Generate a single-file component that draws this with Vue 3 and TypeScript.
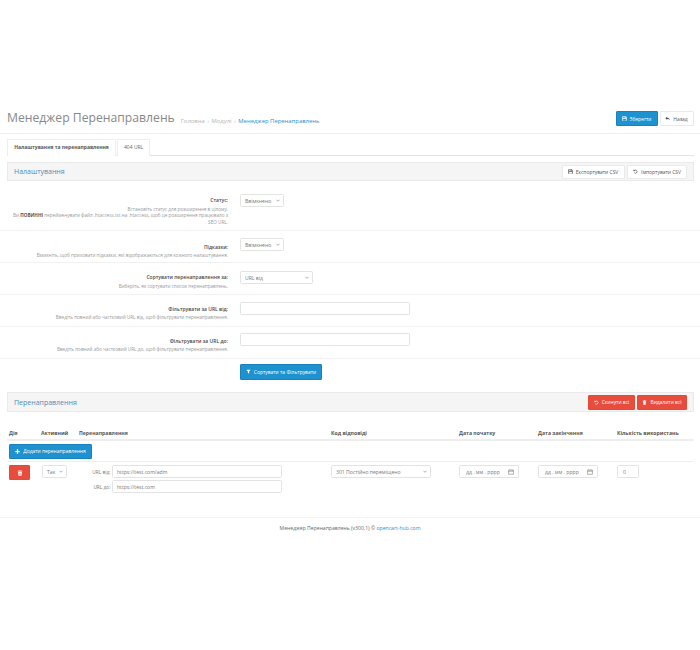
<script setup lang="ts">
interface Row { label: string; help: string[]; kind: 'select' | 'wide' | 'input'; value?: string; cls: string }
const rows: Row[] = [
  { label: 'Статус:', help: ['Встановіть статус для розширення в цілому.', 'Ви <b>ПОВИННІ</b> перейменувати файл .htaccess.txt на .htaccess, щоб це розширення працювало з', 'SEO URL.'], kind: 'select', value: 'Ввімкнено', cls: 'r1' },
  { label: 'Підказки:', help: ['Вмикніть, щоб приховати підказки, які відображаються для кожного налаштування.'], kind: 'select', value: 'Ввімкнено', cls: 'r2' },
  { label: 'Сортувати перенаправлення за:', help: ['Виберіть, як сортувати список перенаправлень.'], kind: 'wide', value: 'URL від', cls: 'r3' },
  { label: 'Фільтрувати за URL від:', help: ['Введіть повний або частковий URL від, щоб фільтрувати перенаправлення.'], kind: 'input', cls: 'r4' },
  { label: 'Фільтрувати за URL до:', help: ['Введіть повний або частковий URL до, щоб фільтрувати перенаправлення.'], kind: 'input', cls: 'r5' }
]
const cols = ['Дія', 'Активний', 'Перенаправлення', 'Код відповіді', 'Дата початку', 'Дата закінчення', 'Кількість використань']
</script>

<template>
  <div class="page">
    <header class="top">
      <h1>Менеджер Перенаправлень</h1>
      <nav class="crumbs"><span>Головна</span><i>›</i><span>Модулі</span><i>›</i><a>Менеджер Перенаправлень</a></nav>
      <div class="top-btns">
        <button class="btn blue save">
          <svg viewBox="0 0 16 16"><path fill="currentColor" d="M1 1h11l3 3v11H1zM4 2v4h7V2zm4 .7h2v2.6H8zM3.500 9v5h9V9z"/></svg>Зберегти
        </button>
        <button class="btn white back">
          <svg viewBox="0 0 16 16"><path fill="currentColor" d="M7 2v3.500c4.500 0 8 2 8 8-1.500-3-4-4-8-4V13L1 7.500z"/></svg>Назад
        </button>
      </div>
    </header>

    <div class="tabs">
      <div class="tab active">Налаштування та перенаправлення</div>
      <div class="tab">404 URL</div>
    </div>

    <section class="panel first">
      <h2>Налаштування</h2>
      <div class="panel-btns">
        <button class="btn white exp">
          <svg viewBox="0 0 16 16"><path fill="currentColor" d="M1 1h11l3 3v11H1zM4 2v4h7V2zm4 .7h2v2.6H8zM3.500 9v5h9V9z"/></svg>Експортувати CSV
        </button>
        <button class="btn white imp">
          <svg viewBox="0 0 16 16"><path fill="none" stroke="currentColor" stroke-width="2.200" d="M3.500 6A5 5 0 1 1 4 11.500"/><path fill="currentColor" d="M1 2l6 1-5 5z"/></svg>Імпортувати CSV
        </button>
      </div>
    </section>

    <div class="form">
      <div v-for="r in rows" :key="r.label" class="row" :class="r.cls">
        <div class="lab">
          <strong>{{ r.label }}</strong>
          <p v-for="h in r.help" :key="h" v-html="h"></p>
        </div>
        <div class="ctl">
          <div v-if="r.kind !== 'input'" class="sel" :class="r.kind">
            <span>{{ r.value }}</span>
            <svg viewBox="0 0 10 6"><path fill="none" stroke="#666" stroke-width="1.300" d="M1 1l4 4 4-4"/></svg>
          </div>
          <div v-else class="inp big"></div>
        </div>
      </div>
      <div class="submit">
        <button class="btn blue sort">
          <svg viewBox="0 0 16 16"><path fill="currentColor" d="M1 2h14L10 8v7L6 12V8z"/></svg>Сортувати та Фільтрувати
        </button>
      </div>
    </div>

    <section class="panel second">
      <h2>Перенаправлення</h2>
      <div class="panel-btns">
        <button class="btn red reset">
          <svg viewBox="0 0 16 16"><path fill="none" stroke="currentColor" stroke-width="2.200" d="M3.500 6A5 5 0 1 1 4 11.500"/><path fill="currentColor" d="M1 2l6 1-5 5z"/></svg>Скинути всі
        </button>
        <button class="btn red delall">
          <svg viewBox="0 0 16 16"><path fill="currentColor" d="M6 1h4l1 1h3v2H2V2h3zM3 5h10l-1 10H4zm2.500 2v6h1V7zm4 0v6h1V7z"/></svg>Видалити всі
        </button>
      </div>
    </section>

    <div class="table">
      <div class="grid head">
        <div v-for="c in cols" :key="c">{{ c }}</div>
      </div>
      <div class="add-row">
        <button class="btn blue add">
          <svg viewBox="0 0 16 16"><path fill="currentColor" d="M6 1h4v5h5v4h-5v5H6v-5H1V6h5z"/></svg>Додати перенаправлення
        </button>
      </div>
      <div class="grid body">
        <div><button class="btn red trash"><svg viewBox="0 0 16 16"><path fill="currentColor" d="M6 1h4l1 1h3v2H2V2h3zM3 5h10l-1 10H4zm2.500 2v6h1V7zm4 0v6h1V7z"/></svg></button></div>
        <div><div class="sel yes"><span>Так</span><svg viewBox="0 0 10 6"><path fill="none" stroke="#666" stroke-width="1.300" d="M1 1l4 4 4-4"/></svg></div></div>
        <div class="urls">
          <label><span>URL від:</span><div class="inp url">https://test.com/adm</div></label>
          <label><span>URL до:</span><div class="inp url">https://test.com</div></label>
        </div>
        <div><div class="sel code"><span>301 Постійно переміщено</span><svg viewBox="0 0 10 6"><path fill="none" stroke="#666" stroke-width="1.300" d="M1 1l4 4 4-4"/></svg></div></div>
        <div><div class="inp date"><span>дд . мм . рррр</span><svg viewBox="0 0 16 16"><path fill="none" stroke="#555" stroke-width="1.200" d="M1.500 3h13v11h-13zM1.500 6h13M5 1v2M11 1v2"/></svg></div></div>
        <div><div class="inp date"><span>дд . мм . рррр</span><svg viewBox="0 0 16 16"><path fill="none" stroke="#555" stroke-width="1.200" d="M1.500 3h13v11h-13zM1.500 6h13M5 1v2M11 1v2"/></svg></div></div>
        <div><div class="inp num">0</div></div>
      </div>
    </div>

    <footer class="foot">Менеджер Перенаправлень (v300.1) © <a>opencart-hub.com</a></footer>
  </div>
</template>

<style>
html, body { background: #fff; }
</style>

<style scoped>
.page { width: 700px; height: 650px; overflow: hidden; padding-top: 100px; box-sizing: border-box; font-family: "Open Sans", sans-serif; color: #666; font-size: 5.5px; background: #fff; }
.top { height: 33px; display: flex; align-items: flex-start; padding: 0 6.500px 0 7px; border-bottom: 1px solid #eee; }
h1 { margin: 9px 0 0; font-size: 12.200px; line-height: 18px; font-weight: 400; color: #888; white-space: nowrap; }
.crumbs { margin: 16.500px 0 0 6px; font-size: 5.900px; line-height: 8px; color: #b5b5b5; display: flex; gap: 2.500px; white-space: nowrap; }
.crumbs i { font-style: normal; }
.crumbs a { color: #1e91cf; }
.top-btns { margin-left: auto; display: flex; gap: 2px; margin-top: 11px; }
.btn { display: inline-flex; align-items: center; justify-content: center; gap: 3px; padding: 0; box-sizing: border-box; font: inherit; font-size: 4.950px; border-radius: 1px; border: 1px solid; white-space: nowrap; }
.btn svg { width: 5px; height: 5px; flex: none; }
.blue { background: #1e91cf; border-color: #1a82ba; color: #fff; }
.white { background: #fff; border-color: #eaeaea; color: #555; }
.red { background: #e74c3c; border-color: #e6483a; color: #fff; }
.save { width: 42px; height: 15px; }
.back { width: 34px; height: 15px; }
.tabs { display: flex; margin: 5px 6.500px 0 7px; border-bottom: 1px solid #e4e4e4; height: 16px; gap: 1px; }
.tab { padding: 0 6px; height: 17px; line-height: 15px; box-sizing: border-box; border: 1px solid #eee; border-bottom: 0; border-radius: 1px 1px 0 0; font-size: 5px; color: #666; background: #fff; }
.tab.active { width: 109px; padding: 0; text-align: center; font-weight: 700; color: #555; }
.panel { margin: 0 6.500px 0 7px; height: 19px; box-sizing: border-box; background: #f5f5f5; border: 1px solid #eaeaea; display: flex; align-items: center; justify-content: space-between; padding: 0 5.500px 0 6px; }
.panel.first { margin-top: 6px; }
.panel.second { margin-top: 12px; height: 20px; }
h2 { margin: 0; font-size: 7px; font-weight: 400; color: #4f8bb0; }
.panel-btns { display: flex; gap: 2.500px; }
.exp { width: 63px; height: 14px; }
.imp { width: 60px; height: 14px; }
.second .panel-btns { gap: 2px; }
.reset { width: 47px; height: 15px; }
.delall { width: 50px; height: 15px; }
.row { display: flex; border-bottom: 1px solid #f1f1f1; box-sizing: border-box; }
.r1 { height: 50px; padding-top: 13px; }
.r2 { height: 32px; padding-top: 7px; }
.r3 { height: 32px; padding-top: 8px; }
.r4 { height: 32px; padding-top: 7px; }
.r5 { height: 32px; padding-top: 6px; }
.lab { width: 228px; text-align: right; flex: none; padding-top: 2px; }
.r2 .lab { padding-top: 4.500px; }
.r3 .lab { padding-top: 2px; }
.r4 .lab { padding-top: 2.500px; }
.r5 .lab { padding-top: 3.500px; }
.lab strong { display: block; font-size: 5px; line-height: 8px; font-weight: 600; color: #4a4a4a; margin-bottom: 1.500px; }
.lab p { margin: 0; font-size: 4.660px; line-height: 6.700px; color: #999; white-space: nowrap; }
.lab p :deep(b) { color: #555; }
.ctl { margin-left: 12px; }
.sel, .inp { box-sizing: border-box; background: #fff; border: 1px solid #e3e3e3; border-radius: 1.500px; display: flex; align-items: center; font-size: 5.100px; color: #777; white-space: nowrap; }
.sel { justify-content: space-between; padding: 0 3px 0 4px; height: 13px; }
.sel svg { width: 4px; height: 3px; flex: none; }
.select { width: 44px; }
.wide { width: 73px; }
.inp.big { width: 170px; height: 13px; }
.submit { padding: 5px 0 0 240px; height: 21px; box-sizing: border-box; }
.sort { width: 82px; height: 15.500px; }
.table { margin: 0 6.500px 0 7px; }
.grid { display: grid; grid-template-columns: 32px 38px 252px 128px 79px 79px 1fr; padding-left: 2px; }
.head { margin-top: 17px; height: 9.500px; border-bottom: 2px solid #eee; font-size: 5.150px; font-weight: 700; color: #555; line-height: 8px; white-space: nowrap; }
.add-row { height: 21px; padding: 3px 0 0 2px; box-sizing: border-box; border-bottom: 1px solid #eee; }
.add { width: 83px; height: 15px; }
.body { padding-top: 3.500px; }
.trash { width: 21px; height: 15px; }
.trash svg { width: 6px; height: 6px; }
.yes { width: 25px; margin-left: 1px; }
.urls { display: flex; flex-direction: column; gap: 2px; }
.urls label { display: flex; align-items: center; gap: 1.500px; justify-content: flex-end; width: 203px; color: #777; font-size: 4.800px; }
.url { width: 170px; height: 13px; padding-left: 4px; }
.code { width: 100px; }
.date { width: 60px; height: 13px; padding: 0 4px 0 6px; justify-content: space-between; }
.date svg { width: 6px; height: 6px; flex: none; }
.num { width: 22px; height: 13px; padding-left: 5px; }
.foot { margin-top: 24px; border-top: 1px solid #f3f3f3; text-align: center; padding-top: 6px; font-size: 5.100px; line-height: 8px; color: #666; }
.foot a { color: #1e91cf; }
</style>
